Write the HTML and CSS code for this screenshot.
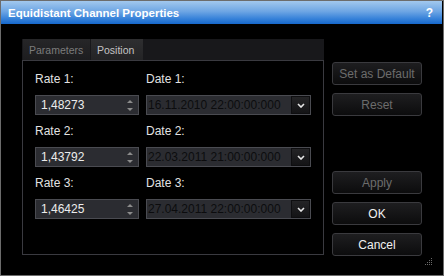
FILE: index.html
```html
<!DOCTYPE html>
<html lang="en">
<head>
    <meta charset="UTF-8">
    <meta name="viewport" content="width=device-width, initial-scale=1.0">
    <title>Equidistant Channel Properties</title>
    <link rel="stylesheet" href="styles.css">
</head>
<body>
    <div class="window">
        <header class="titlebar">
            <span class="title">Equidistant Channel Properties</span>
            <span class="help">?</span>
        </header>
        <div class="content">
            <section class="tabs">
                <nav class="tab-strip">
                    <span class="tab">Parameters</span>
                    <span class="tab active">Position</span>
                </nav>
                <div class="panel">
                    <label class="label">Rate 1:</label>
                    <label class="label">Date 1:</label>
                    <div class="spin"><span class="value">1,48273</span><span class="arrows"><i class="up"></i><i class="down"></i></span></div>
                    <div class="combo"><span class="value">16.11.2010 22:00:00:000</span><span class="drop"><svg width="8" height="5" viewBox="0 0 8 5"><path d="M1 1 L4 4 L7 1" fill="none" stroke="#e6e6e6" stroke-width="1.6"/></svg></span></div>

                    <label class="label">Rate 2:</label>
                    <label class="label">Date 2:</label>
                    <div class="spin"><span class="value">1,43792</span><span class="arrows"><i class="up"></i><i class="down"></i></span></div>
                    <div class="combo"><span class="value">22.03.2011 21:00:00:000</span><span class="drop"><svg width="8" height="5" viewBox="0 0 8 5"><path d="M1 1 L4 4 L7 1" fill="none" stroke="#e6e6e6" stroke-width="1.6"/></svg></span></div>

                    <label class="label">Rate 3:</label>
                    <label class="label">Date 3:</label>
                    <div class="spin"><span class="value">1,46425</span><span class="arrows"><i class="up"></i><i class="down"></i></span></div>
                    <div class="combo"><span class="value">27.04.2011 22:00:00:000</span><span class="drop"><svg width="8" height="5" viewBox="0 0 8 5"><path d="M1 1 L4 4 L7 1" fill="none" stroke="#e6e6e6" stroke-width="1.6"/></svg></span></div>
                </div>
            </section>
            <aside class="buttons">
                <button class="btn" disabled>Set as Default</button>
                <button class="btn" disabled>Reset</button>
                <button class="btn apply" disabled>Apply</button>
                <button class="btn">OK</button>
                <button class="btn">Cancel</button>
            </aside>
        </div>
        <svg class="grip" width="7" height="7" viewBox="0 0 7 7">
            <g fill="#6a6a6a">
                <rect x="6" y="0" width="1" height="1"/>
                <rect x="4" y="2" width="1" height="1"/><rect x="6" y="2" width="1" height="1"/>
                <rect x="2" y="4" width="1" height="1"/><rect x="4" y="4" width="1" height="1"/><rect x="6" y="4" width="1" height="1"/>
                <rect x="0" y="6" width="1" height="1"/><rect x="2" y="6" width="1" height="1"/><rect x="4" y="6" width="1" height="1"/><rect x="6" y="6" width="1" height="1"/>
            </g>
        </svg>
    </div>
</body>
</html>
```

FILE: styles.css
```css
/* Ventana de propiedades, tema oscuro */
* {
    margin: 0;
    padding: 0;
    box-sizing: border-box;
    font-family: 'Liberation Sans', Arial, sans-serif;
}

body {
    background: #000;
}

.window {
    position: relative;
    width: 444px;
    height: 276px;
    border: 1px solid #6c6c6c;
    background: #000;
}

.titlebar {
    height: 23px;
    margin-right: 1px;
    display: flex;
    align-items: center;
    justify-content: space-between;
    padding: 0 9px 0 7px;
    background: linear-gradient(to bottom, #a2c8ee 0%, #6ea6e4 45%, #3a84da 75%, #1668cc 100%);
    color: #fff;
    font-weight: bold;
    font-size: 11.5px;
}

.help {
    font-size: 12px;
}

.content {
    display: flex;
    gap: 8px;
    padding: 15px 0 0 21px;
}

/* Pestañas */
.tabs {
    width: 302px;
}

.tab-strip {
    display: flex;
    gap: 1px;
    height: 21px;
    background: #18181b;
}

.tab {
    display: flex;
    align-items: center;
    padding: 1px 7px 0 6px;
    font-size: 10.5px;
    color: #7c7c7c;
    background: linear-gradient(to bottom, #262628, #1d1d1f);
}

.tab:first-child {
    margin-left: 1px;
    width: 67px;
}

.tab.active {
    color: #c4c4c4;
    background: linear-gradient(to bottom, #2e2e30, #242426);
    width: 52px;
}

.panel {
    height: 195px;
    border: 1px solid #3a3a40;
    padding: 11px 0 0 12px;
    display: grid;
    grid-template-columns: 104px 165px;
    grid-template-rows: 14px 20px 14px 20px 14px 20px;
    column-gap: 7px;
    row-gap: 9px;
}

.label {
    font-size: 12px;
    line-height: 14px;
    color: #e2e2e2;
}

.spin,
.combo {
    display: flex;
    align-items: center;
    border: 1px solid #4a4b51;
    background: #2b2c31;
    font-size: 12px;
}

.spin .value {
    flex: 1;
    padding-left: 5px;
    color: #ececec;
}

.arrows {
    display: flex;
    flex-direction: column;
    gap: 5px;
    width: 14px;
    padding-left: 3px;
}

.arrows i {
    width: 0;
    height: 0;
    border-left: 3px solid transparent;
    border-right: 3px solid transparent;
}

.arrows .up {
    border-bottom: 3px solid #8c8c8c;
}

.arrows .down {
    border-top: 3px solid #8c8c8c;
}

.combo .value {
    flex: 1;
    padding-left: 1px;
    color: #0c0c0e;
    white-space: nowrap;
    overflow: hidden;
}

.drop {
    width: 19px;
    height: 18px;
    margin-right: 0;
    display: flex;
    align-items: center;
    justify-content: center;
    background: linear-gradient(to bottom, #242426, #141416);
    border: 1px solid #0e0e10;
}

/* Botones de la derecha */
.buttons {
    display: flex;
    flex-direction: column;
    gap: 8px;
    width: 90px;
    margin-top: 23px;
}

.btn {
    height: 23px;
    border: 1px solid #3a3a3e;
    border-radius: 3px;
    background: linear-gradient(to bottom, #1e1e20, #0c0c0d);
    color: #f0f0f0;
    font-size: 12px;
}

.btn:disabled {
    color: #6c6c6c;
}

.btn.apply {
    margin-top: 47px;
}

.grip {
    position: absolute;
    right: 11px;
    bottom: 10px;
}
```
